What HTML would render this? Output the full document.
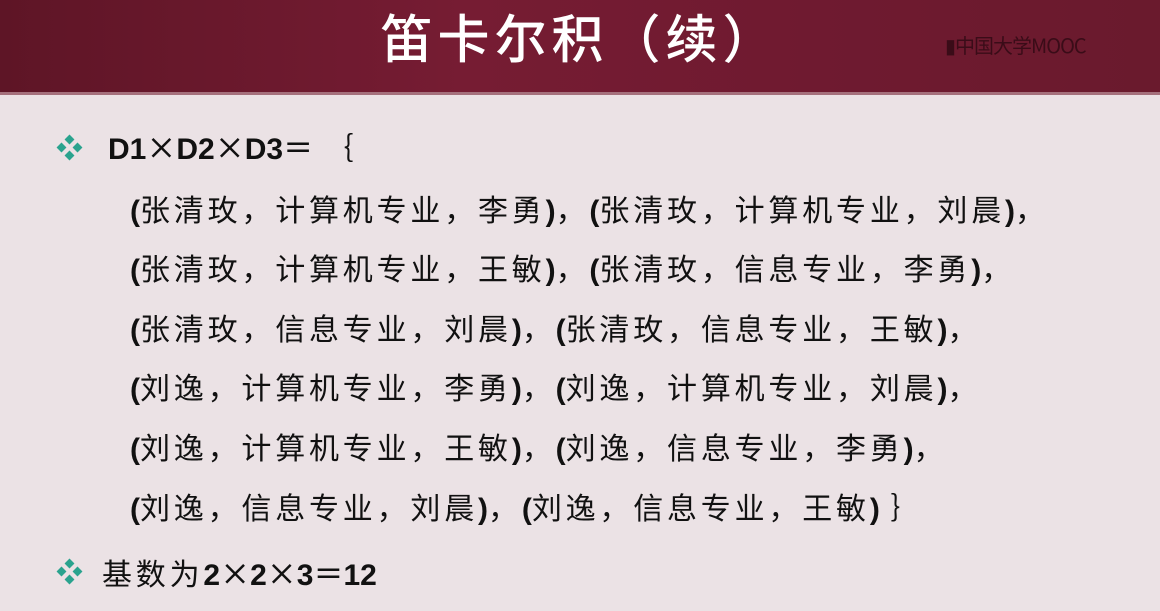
<!DOCTYPE html>
<html><head><meta charset="utf-8"><style>
html,body{margin:0;padding:0}
body{width:1160px;height:611px;overflow:hidden;position:relative;background:#ebe2e5;font-family:"Liberation Sans","Noto Sans CJK SC",sans-serif}
.hdr{position:absolute;left:0;top:0;width:1160px;height:95px;background:linear-gradient(90deg,#5e1526 0%,#761c33 40%,#6f1a30 70%,#6a1a2d 100%)}
.hdr:after{content:"";position:absolute;left:0;right:0;bottom:0;height:3px;background:#a5707c}
.title{position:absolute;left:0;width:1160px;top:-2px;text-align:center;color:#fff;font-size:52px;font-weight:500;font-family:"Noto Sans CJK SC",sans-serif;letter-spacing:5px}
.mooc{position:absolute;left:945px;top:30px;color:#3a0c18;font-size:20px;font-family:"Noto Sans CJK SC",sans-serif;letter-spacing:-1px}
.ln{position:absolute;left:130px;font-size:30px;color:#111;white-space:nowrap;letter-spacing:3.8px;font-family:"Noto Sans CJK SC",sans-serif;line-height:36px}
.ln b{font-family:"Liberation Sans",sans-serif;font-weight:bold;letter-spacing:0}
.ln b.x{font-family:"Noto Sans CJK SC",sans-serif;font-weight:500;letter-spacing:0}
.bul{position:absolute;left:58px;width:24px;height:24px}
.bul i{position:absolute;width:7px;height:7px;background:#2aa38e;transform:rotate(45deg)}
</style></head><body>
<div class="hdr"><div class="title">笛卡尔积（续）</div><div class="mooc">▮中国大学MOOC</div></div>
<div class="bul" style="top:136px"><i style="left:8px;top:0"></i><i style="left:0;top:8px"></i><i style="left:16px;top:8px"></i><i style="left:8px;top:16px"></i></div>
<div class="ln" style="left:108px;top:128px"><b>D1</b><b class="x">×</b><b>D2</b><b class="x">×</b><b>D3</b><b class="x">＝</b> ｛</div>
<div class="ln" style="top:190px"><b>(</b>张清玫，计算机专业，李勇<b>)</b>，<b>(</b>张清玫，计算机专业，刘晨<b>)</b>，</div>
<div class="ln" style="top:249px"><b>(</b>张清玫，计算机专业，王敏<b>)</b>，<b>(</b>张清玫，信息专业，李勇<b>)</b>，</div>
<div class="ln" style="top:309px"><b>(</b>张清玫，信息专业，刘晨<b>)</b>，<b>(</b>张清玫，信息专业，王敏<b>)</b>，</div>
<div class="ln" style="top:368px"><b>(</b>刘逸，计算机专业，李勇<b>)</b>，<b>(</b>刘逸，计算机专业，刘晨<b>)</b>，</div>
<div class="ln" style="top:428px"><b>(</b>刘逸，计算机专业，王敏<b>)</b>，<b>(</b>刘逸，信息专业，李勇<b>)</b>，</div>
<div class="ln" style="top:488px"><b>(</b>刘逸，信息专业，刘晨<b>)</b>，<b>(</b>刘逸，信息专业，王敏<b>)</b> ｝</div>
<div class="bul" style="top:560px"><i style="left:8px;top:0"></i><i style="left:0;top:8px"></i><i style="left:16px;top:8px"></i><i style="left:8px;top:16px"></i></div>
<div class="ln" style="left:102px;top:554px">基数为<b>2</b><b class="x">×</b><b>2</b><b class="x">×</b><b>3</b><b class="x">＝</b><b>12</b></div>
</body></html>
